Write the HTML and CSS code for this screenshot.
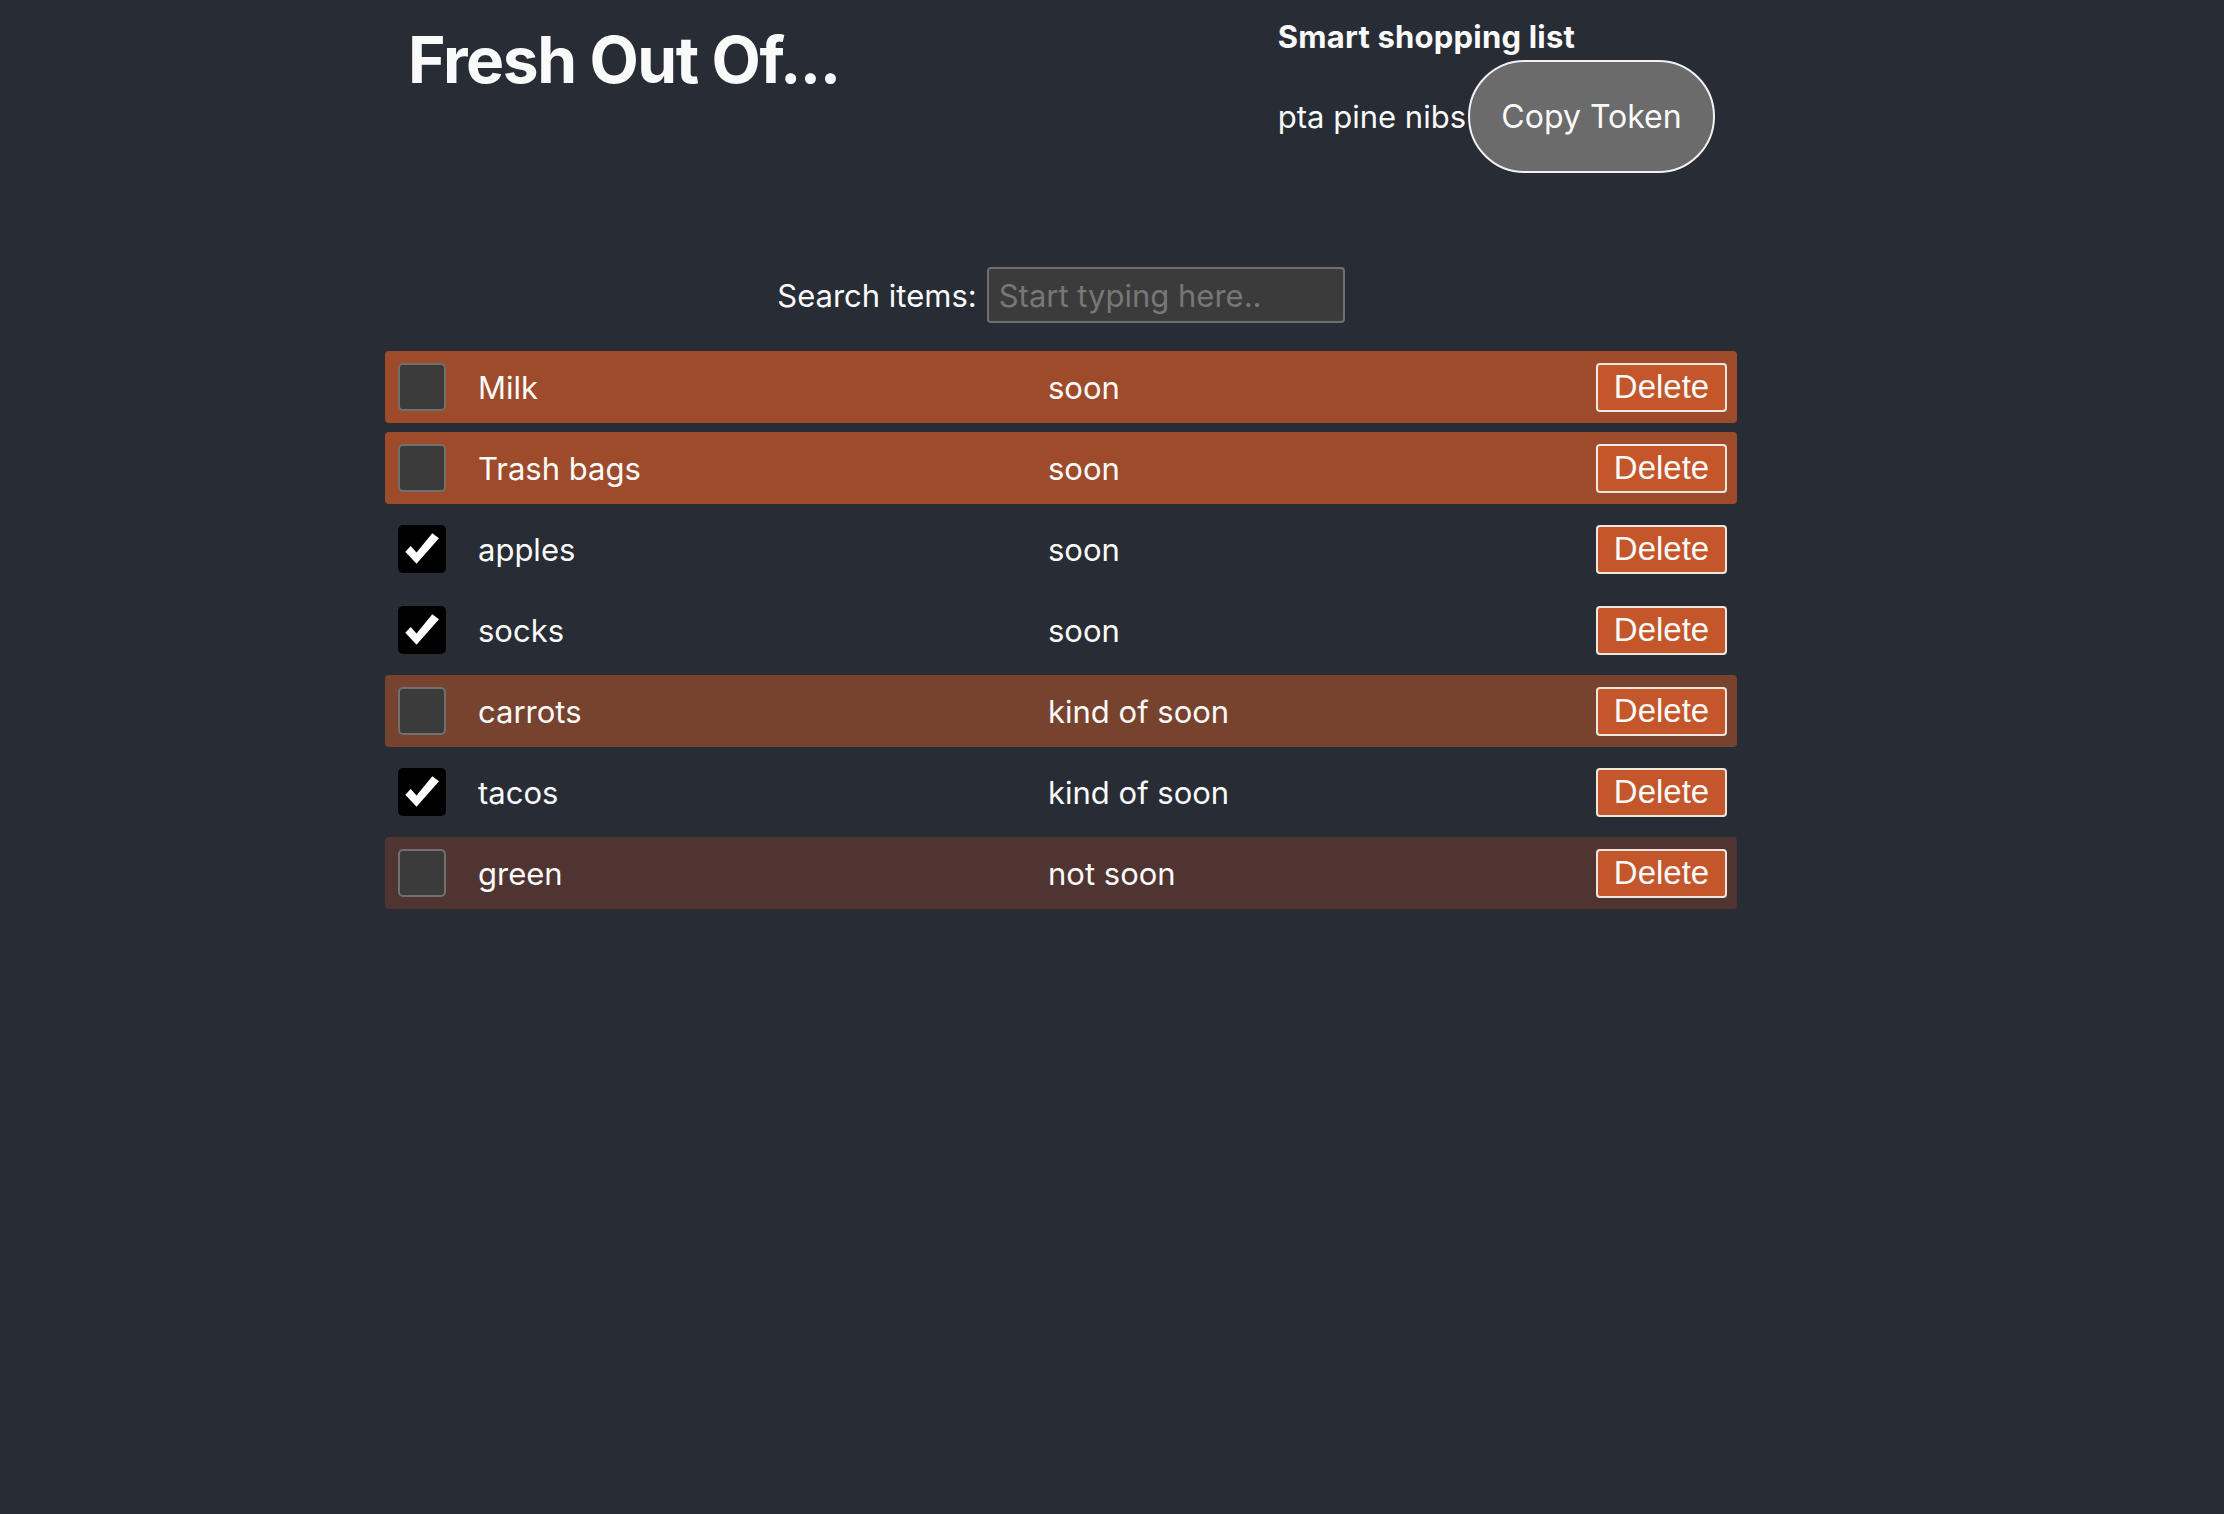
FILE: index.html
```html
<!DOCTYPE html>
<html lang="en">
<head>
<meta charset="utf-8">
<title>Fresh Out Of...</title>
<link rel="stylesheet" href="styles.css">
</head>
<body>
<div class="app">
  <header class="header">
    <h1 class="title">Fresh Out Of...</h1>
    <div class="list-info">
      <h4 class="list-name">Smart shopping list</h4>
      <div class="token-row">
        <span class="token">pta pine nibs</span>
        <button class="copy-btn">Copy Token</button>
      </div>
    </div>
  </header>

  <div class="search">
    <label class="search-label" for="s">Search items:</label>
    <input id="s" class="search-input" type="text" placeholder="Start typing here..">
  </div>

  <ul class="items">
    <li class="item soon">
      <span class="box"></span>
      <span class="name">Milk</span>
      <span class="when">soon</span>
      <button class="del">Delete</button>
    </li>
    <li class="item soon">
      <span class="box"></span>
      <span class="name">Trash bags</span>
      <span class="when">soon</span>
      <button class="del">Delete</button>
    </li>
    <li class="item">
      <span class="box checked"><svg viewBox="0 0 48 48" width="48" height="48"><polygon points="7.3,26.7 12.7,21 18.5,27.5 34.3,8.3 41,13.3 18.5,38.7" fill="#fff"/></svg></span>
      <span class="name">apples</span>
      <span class="when">soon</span>
      <button class="del">Delete</button>
    </li>
    <li class="item">
      <span class="box checked"><svg viewBox="0 0 48 48" width="48" height="48"><polygon points="7.3,26.7 12.7,21 18.5,27.5 34.3,8.3 41,13.3 18.5,38.7" fill="#fff"/></svg></span>
      <span class="name">socks</span>
      <span class="when">soon</span>
      <button class="del">Delete</button>
    </li>
    <li class="item kind">
      <span class="box"></span>
      <span class="name">carrots</span>
      <span class="when">kind of soon</span>
      <button class="del">Delete</button>
    </li>
    <li class="item">
      <span class="box checked"><svg viewBox="0 0 48 48" width="48" height="48"><polygon points="7.3,26.7 12.7,21 18.5,27.5 34.3,8.3 41,13.3 18.5,38.7" fill="#fff"/></svg></span>
      <span class="name">tacos</span>
      <span class="when">kind of soon</span>
      <button class="del">Delete</button>
    </li>
    <li class="item notsoon">
      <span class="box"></span>
      <span class="name">green</span>
      <span class="when">not soon</span>
      <button class="del">Delete</button>
    </li>
  </ul>
</div>
</body>
</html>
```

FILE: styles.css
```css
* { box-sizing: border-box; }

html, body {
  margin: 0;
  padding: 0;
  background: #282c34;
}

body {
  font-family: Inter, "Noto Sans", sans-serif;
  color: #fafafa;
  font-size: 32px;
  min-height: 1514px;
}

.app {
  width: 1352px;
  margin-left: 385px;
}

.header {
  display: flex;
  justify-content: space-between;
  align-items: flex-start;
  padding: 0 22px 0 23px;
}

.title {
  margin: 21px 0 0;
  font-size: 64px;
  font-weight: 700;
  line-height: 77px;
  letter-spacing: -1.4px;
}

.list-info {
  margin-top: 20px;
}

.list-name {
  margin: 0 0 6px;
  font-size: 31px;
  font-weight: 700;
  line-height: 34px;
  letter-spacing: 0.2px;
}

.token-row {
  display: flex;
  align-items: center;
}

.token {
  font-size: 31px;
  white-space: nowrap;
}

.copy-btn {
  font-family: Inter, "Noto Sans", sans-serif;
  font-size: 32px;
  line-height: 41px;
  color: #fafafa;
  background: #6b6b6b;
  border: 2px solid #f2f2f2;
  border-radius: 60px;
  padding: 0;
  width: 247px;
  height: 113px;
  margin-left: 2px;
  white-space: nowrap;
  text-align: center;
}

.search {
  display: flex;
  justify-content: center;
  align-items: center;
  margin-top: 94px;
  margin-bottom: 28px;
  height: 56px;
}

.search-label {
  font-size: 31px;
}

.search-input {
  margin-left: 10px;
  width: 358px;
  height: 56px;
  background: #3b3b3b;
  border: 2px solid #6f6f6f;
  border-radius: 4px;
  padding: 0 10px;
  font-family: Inter, "Noto Sans", sans-serif;
  font-size: 31px;
  color: #fafafa;
}

.search-input::placeholder {
  color: #777;
}

.items {
  list-style: none;
  margin: 0;
  padding: 0;
}

.item {
  display: grid;
  grid-template-columns: 48px 538px 1fr auto;
  column-gap: 32px;
  align-items: center;
  height: 72px;
  margin-bottom: 9px;
  padding: 0 10px 0 13px;
  border-radius: 4px;
  font-size: 31px;
}

.item.soon { background: #9e4b2c; }
.item.kind { background: #77432f; }
.item.notsoon { background: #503431; }

.box {
  width: 48px;
  height: 48px;
  background: #3b3b3b;
  border: 2px solid #707070;
  border-radius: 5px;
  display: block;
}

.box.checked {
  background: #000;
  border: none;
}

.box.checked svg {
  display: block;
}

.del {
  font-family: "Liberation Sans", Arial, sans-serif;
  font-size: 33px;
  line-height: 38px;
  color: #fafafa;
  background: #c4562b;
  border: 2px solid #f0e6e0;
  border-radius: 4px;
  width: 131px;
  height: 49px;
  padding: 0;
}
```
